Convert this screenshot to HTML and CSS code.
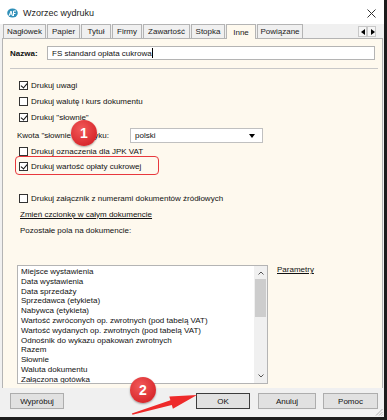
FILE: index.html
```html
<!DOCTYPE html>
<html lang="pl">
<head>
    <meta charset="UTF-8">
    <title>Wzorzec wydruku</title>
    <link rel="stylesheet" href="styles.css">
</head>
<body>

    <div class="window">
        <!-- Pasek tytułu -->
        <div class="titlebar">
            <svg class="app-icon" width="11" height="10" viewBox="0 0 11 10">
                <ellipse cx="5.5" cy="5" rx="5.3" ry="4.6" fill="#2f8fb8"/>
                <path d="M2 8 L4 3 L5.5 8 M3 6 H5 M6.5 8 V3 H9 M6.5 5.5 H8.5" stroke="#fff" stroke-width="1" fill="none"/>
            </svg>
            <span class="title">Wzorzec wydruku</span>
            <svg class="close" width="9" height="9" viewBox="0 0 9 9">
                <path d="M0.5 0.5 L8.5 8.5 M8.5 0.5 L0.5 8.5" stroke="#333" stroke-width="1"/>
            </svg>
        </div>

        <!-- Zakładki -->
        <div class="tabs">
            <span class="tab w43">Nagłówek</span>
            <span class="tab w33">Papier</span>
            <span class="tab w30">Tytuł</span>
            <span class="tab w30">Firmy</span>
            <span class="tab w47">Zawartość</span>
            <span class="tab w34">Stopka</span>
            <span class="tab w30 active">Inne</span>
            <span class="tab w46">Powiązane</span>
            <span class="tab-arrows">
                <span class="arr arr-left"></span>
                <span class="arr arr-right"></span>
            </span>
        </div>

        <div class="panel">
            <div class="name-row">
                <span class="name-label">Nazwa:</span>
                <div class="input">FS standard opłata cukrowa<span class="caret"></span></div>
            </div>
            <div class="sep"></div>

            <div class="check r1"><span class="box on"></span>Drukuj uwagi</div>
            <div class="check r2"><span class="box"></span>Drukuj walutę i kurs dokumentu</div>
            <div class="check r2"><span class="box on"></span>Drukuj "słownie"</div>

            <div class="lang-row">
                <span class="lang-label">Kwota "słownie" w języku:</span>
                <div class="select">polski<span class="select-arrow"></span></div>
            </div>

            <div class="check r2"><span class="box"></span>Drukuj oznaczenia dla JPK VAT</div>
            <div class="check marked"><span class="box on"></span>Drukuj wartość opłaty cukrowej</div>

            <div class="check r-att"><span class="box"></span>Drukuj załącznik z numerami dokumentów źródłowych</div>
            <div class="link-row"><span class="link">Zmień czcionkę w całym dokumencie</span></div>
            <div class="fields-label">Pozostałe pola na dokumencie:</div>

            <div class="list-area">
                <div class="listbox">
                    <ul class="items">
                        <li>Miejsce wystawienia</li>
                        <li>Data wystawienia</li>
                        <li>Data sprzedaży</li>
                        <li>Sprzedawca (etykieta)</li>
                        <li>Nabywca (etykieta)</li>
                        <li>Wartość zwróconych op. zwrotnych (pod tabelą VAT)</li>
                        <li>Wartość wydanych op. zwrotnych (pod tabelą VAT)</li>
                        <li>Odnośnik do wykazu opakowań zwrotnych</li>
                        <li>Razem</li>
                        <li>Słownie</li>
                        <li>Waluta dokumentu</li>
                        <li>Załączona gotówka</li>
                    </ul>
                    <div class="scrollbar">
                        <svg class="sb-arrow" width="6" height="4" viewBox="0 0 6 4"><path d="M0.5 3.5 L3 1 L5.5 3.5" stroke="#555" fill="none"/></svg>
                        <div class="thumb"></div>
                        <svg class="sb-arrow down" width="6" height="4" viewBox="0 0 6 4"><path d="M0.5 0.5 L3 3 L5.5 0.5" stroke="#555" fill="none"/></svg>
                    </div>
                </div>
                <span class="link params">Parametry</span>
            </div>
        </div>

        <!-- Przyciski -->
        <div class="buttons">
            <span class="btn try">Wypróbuj</span>
            <span class="btn ok">OK</span>
            <span class="btn cancel">Anuluj</span>
            <span class="btn help">Pomoc</span>
            <svg class="grip" width="8" height="8" viewBox="0 0 8 8">
                <path d="M7.5 1 L1 7.5 M7.5 4 L4 7.5 M7.5 6.5 L6.5 7.5" stroke="#b0b0b0" stroke-width="1"/>
            </svg>
        </div>
    </div>

    <!-- Oznaczenia instrukcji -->
    <div class="badge b1">1</div>
    <div class="badge b2">2</div>
    <svg class="pointer" width="387" height="420" viewBox="0 0 387 420">
        <polygon points="197,395 172.9,408.8 171.8,405 132.5,414.8 131.8,413.4 170.4,400.2 169.3,396.4" fill="#ee2a2a"/>
    </svg>

</body>
</html>
```

FILE: styles.css
```css
* {
    margin: 0;
    padding: 0;
    box-sizing: border-box;
}

body {
    width: 387px;
    height: 420px;
    overflow: hidden;
    background: #1c1c1c;
    font-family: "Liberation Sans", Arial, sans-serif;
    font-size: 8px;
    color: #111;
    position: relative;
}

.window {
    width: 384px;
    height: 417px;
    background: #f0f0f0;
    display: flex;
    flex-direction: column;
}

/* Pasek tytułu */
.titlebar {
    height: 24px;
    background: #fff;
    display: flex;
    align-items: center;
    padding-left: 7px;
    padding-top: 2px;
}

.app-icon {
    margin-right: 5px;
}

.title {
    font-size: 9px;
    color: #222;
}

.close {
    margin-left: auto;
    margin-right: 8px;
}

/* Zakładki */
.tabs {
    height: 14px;
    display: flex;
    padding-left: 3px;
    position: relative;
    z-index: 1;
}

.tab {
    height: 14px;
    margin-right: 1px;
    border: 1px solid #b4b4b4;
    border-bottom: none;
    background: #f0f0f0;
    display: flex;
    align-items: center;
    justify-content: center;
    color: #222;
}

.tab.active {
    background: #fef9ee;
    height: 15px;
}

.w30 { width: 30px; }
.w33 { width: 33px; }
.w34 { width: 34px; }
.w43 { width: 43px; }
.w46 { width: 46px; }
.w47 { width: 47px; }

.tab-arrows {
    margin-left: auto;
    margin-right: 8px;
    margin-top: 2px;
    display: flex;
    height: 11px;
}

.arr {
    width: 9px;
    height: 11px;
    border: 1px solid #c8c8c8;
    background: #f5f5f5;
    position: relative;
}

.arr::after {
    content: "";
    position: absolute;
    top: 2px;
    border-top: 3px solid transparent;
    border-bottom: 3px solid transparent;
}

.arr-left::after {
    left: 2px;
    border-right: 4px solid #000;
}

.arr-right::after {
    left: 3px;
    border-left: 4px solid #000;
}

/* Panel */
.panel {
    height: 350px;
    margin-left: 2px;
    margin-right: 1px;
    background: #fef9ee;
    border: 1px solid #b4b4b4;
    border-bottom: none;
    padding-left: 14px;
}

.name-row {
    margin-top: 7px;
    margin-left: -7px;
    height: 14px;
    display: flex;
    align-items: center;
}

.name-label {
    width: 37px;
    font-weight: bold;
}

.input {
    width: 328px;
    height: 14px;
    background: #fff;
    border: 1px solid #b4b4b4;
    padding-left: 4px;
    display: flex;
    align-items: center;
}

.caret {
    width: 1px;
    height: 10px;
    background: #000;
}

.sep {
    margin-top: 8px;
    margin-left: -7px;
    margin-right: 4px;
    border-top: 1px solid #c8c8c8;
}

.check {
    height: 15px;
    display: flex;
    align-items: center;
    padding-left: 2px;
    position: relative;
}

.r1 { margin-top: 9px; }
.r2 { margin-top: 1px; }
.r-att { margin-top: 17px; }

.box {
    width: 9px;
    height: 9px;
    border: 1px solid #333;
    background: #fff;
    margin-right: 3px;
    position: relative;
}

.box.on::after {
    content: "";
    position: absolute;
    left: 2px;
    top: 0;
    width: 3px;
    height: 5px;
    border-right: 1.5px solid #111;
    border-bottom: 1.5px solid #111;
    transform: rotate(40deg);
}

/* Czerwona ramka wokół opcji */
.marked::after {
    content: "";
    position: absolute;
    left: -2px;
    top: -3px;
    width: 142px;
    height: 17px;
    border: 1.5px solid #e8383d;
    border-radius: 4px;
}

.lang-row {
    margin-top: 3px;
    height: 15px;
    display: flex;
    align-items: center;
}

.lang-label {
    width: 113px;
}

.select {
    width: 133px;
    height: 15px;
    background: #fff;
    border: 1px solid #c0c0c0;
    padding-left: 4px;
    display: flex;
    align-items: center;
    position: relative;
}

.select-arrow {
    position: absolute;
    right: 7px;
    top: 5px;
    border-left: 3px solid transparent;
    border-right: 3px solid transparent;
    border-top: 4px solid #000;
}

.link-row {
    margin-top: 1px;
    height: 14px;
    display: flex;
    align-items: center;
    padding-left: 3px;
}

.link {
    text-decoration: underline;
}

.fields-label {
    margin-top: 3px;
    height: 14px;
    line-height: 14px;
    padding-left: 3px;
}

/* Lista pól */
.list-area {
    margin-top: 27px;
    display: flex;
    align-items: flex-start;
}

.listbox {
    width: 251px;
    height: 119px;
    background: #fff;
    border: 1px solid #b4b4b4;
    display: flex;
    overflow: hidden;
}

.items {
    list-style: none;
    flex: 1;
    padding-left: 3px;
    padding-top: 1px;
    line-height: 9.8px;
    white-space: nowrap;
    overflow: hidden;
}

.scrollbar {
    width: 13px;
    background: #f0f0f0;
    display: flex;
    flex-direction: column;
    align-items: center;
}

.sb-arrow {
    margin-top: 5px;
}

.sb-arrow.down {
    margin-top: auto;
    margin-bottom: 5px;
}

.thumb {
    width: 11px;
    height: 38px;
    margin-top: 4px;
    background: #cdcdcd;
}

.params {
    margin-left: 9px;
    margin-top: 0;
}

/* Przyciski */
.buttons {
    height: 29px;
    display: flex;
    align-items: flex-start;
    padding-top: 5px;
    padding-left: 10px;
    position: relative;
}

.btn {
    width: 54px;
    height: 16px;
    border: 1px solid #adadad;
    background: #e1e1e1;
    display: flex;
    align-items: center;
    justify-content: center;
    color: #111;
}

.ok {
    margin-left: 132px;
    border-color: #3c3c3c;
}

.cancel {
    margin-left: 8px;
    width: 58px;
}

.help {
    margin-left: 7px;
    width: 55px;
}

.grip {
    position: absolute;
    right: 1px;
    bottom: 1px;
}

/* Oznaczenia */
.badge {
    position: absolute;
    width: 26px;
    height: 26px;
    border-radius: 50%;
    background: radial-gradient(circle at 40% 35%, #f25a5a, #d92a2e 70%, #c21f24);
    box-shadow: 0 1px 2px rgba(0, 0, 0, 0.35);
    color: #fff;
    font-family: "Liberation Sans", Arial, sans-serif;
    font-weight: bold;
    font-size: 14px;
    display: flex;
    align-items: center;
    justify-content: center;
}

.b1 {
    left: 71px;
    top: 120px;
}

.b2 {
    left: 130px;
    top: 377px;
}

.pointer {
    position: absolute;
    left: 0;
    top: 0;
}
```
